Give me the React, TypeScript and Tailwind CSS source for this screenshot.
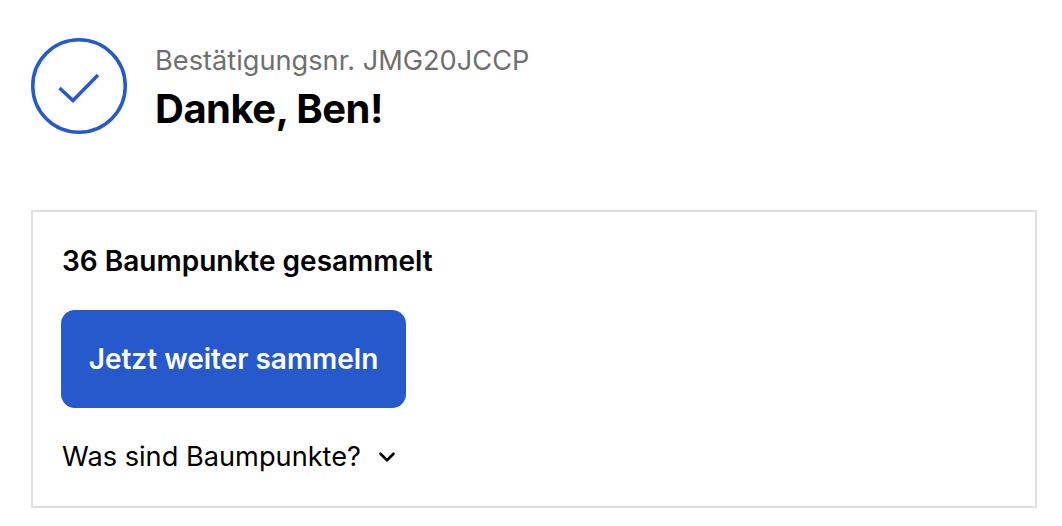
import { ChevronDown } from "lucide-react";

export default function App() {
  return (
    <div className="h-[526px] w-[1062px] overflow-hidden bg-white pl-[31px] pr-[25px] pt-[38px] font-['Inter',sans-serif] text-black">
      <div className="flex items-start gap-[28px]">
        <svg width="96" height="96" viewBox="0 0 96 96" fill="none" className="shrink-0">
          <circle cx="48" cy="48" r="46.25" stroke="#2559cc" strokeWidth="3.5" />
          <path d="M28.5 50 L42 62.5 L67 37" stroke="#2559cc" strokeWidth="3.5" />
        </svg>
        <div className="pt-[5px]">
          <p className="text-[27.2px] leading-[36px] text-[#6f6f6f]">Bestätigungsnr. JMG20JCCP</p>
          <h1 className="mt-[5px] text-[40px] font-bold leading-[50px] tracking-[-0.5px]">Danke, Ben!</h1>
        </div>
      </div>
      <div className="mt-[76px] h-[298px] border-2 border-[#e0e0e0] pl-[28px] pt-[31px]">
        <p className="text-[28px] font-semibold leading-[36px] pl-[1px]">36 Baumpunkte gesammelt</p>
        <button className="mt-[31px] h-[98px] w-[345px] rounded-[14px] bg-[#2559cc] text-[28px] font-semibold text-white">
          Jetzt weiter sammeln
        </button>
        <div className="mt-[31px] flex items-center gap-[13px] pl-[1px] text-[27.2px] leading-[36px]">
          <span>Was sind Baumpunkte?</span>
          <ChevronDown size={26} strokeWidth={2.4} />
        </div>
      </div>
    </div>
  );
}
